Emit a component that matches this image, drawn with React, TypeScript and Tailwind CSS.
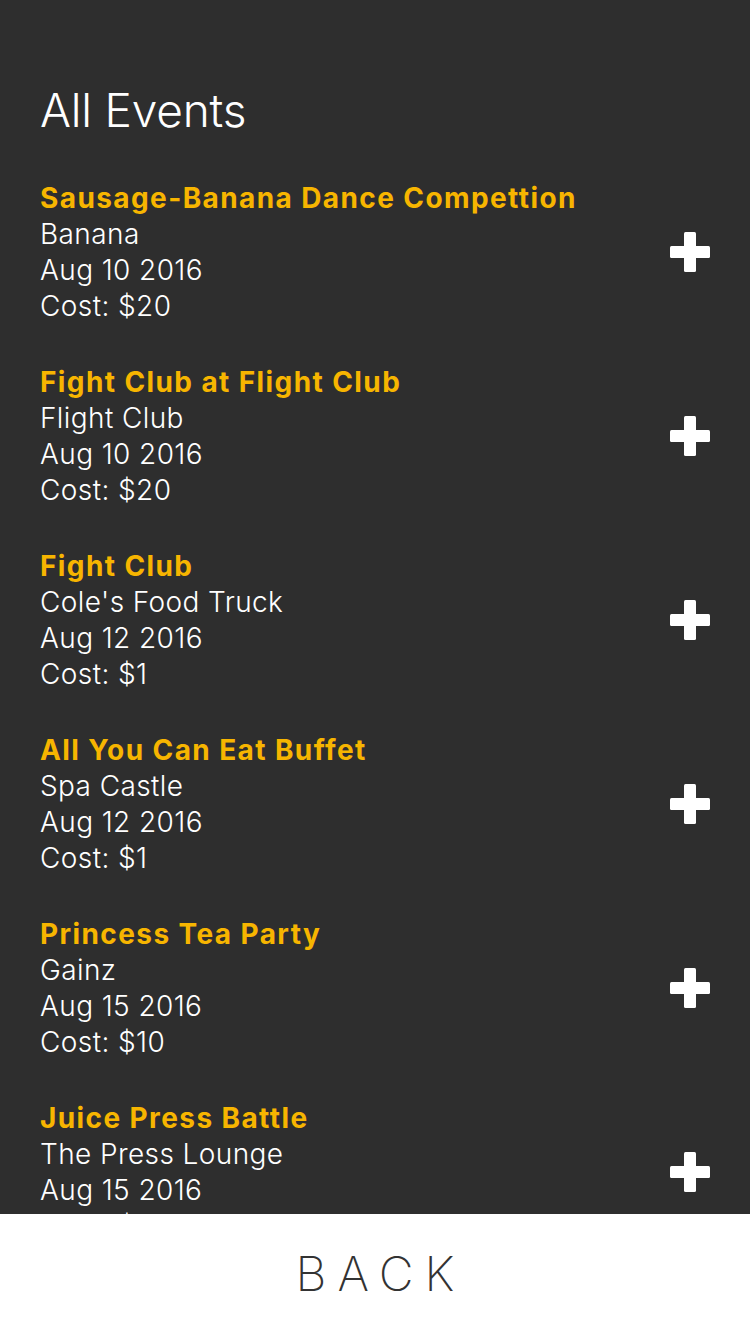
import React from "react";

const events = [
  { title: "Sausage-Banana Dance Compettion", place: "Banana", date: "Aug 10 2016", cost: "Cost: $20" },
  { title: "Fight Club at Flight Club", place: "Flight Club", date: "Aug 10 2016", cost: "Cost: $20" },
  { title: "Fight Club", place: "Cole's Food Truck", date: "Aug 12 2016", cost: "Cost: $1" },
  { title: "All You Can Eat Buffet", place: "Spa Castle", date: "Aug 12 2016", cost: "Cost: $1" },
  { title: "Princess Tea Party", place: "Gainz", date: "Aug 15 2016", cost: "Cost: $10" },
  { title: "Juice Press Battle", place: "The Press Lounge", date: "Aug 15 2016", cost: "Cost: $5" },
];

function Plus() {
  return (
    <svg width="40" height="40" viewBox="0 0 40 40">
      <rect x="14" y="0" width="12" height="40" rx="1.5" fill="#fff" />
      <rect x="0" y="14" width="40" height="12" rx="1.5" fill="#fff" />
    </svg>
  );
}

export default function App() {
  return (
    <div
      className="w-[750px] h-[1334px] flex flex-col bg-[#2e2e2e] overflow-hidden"
      style={{ fontFamily: "Inter, 'Noto Sans', sans-serif" }}
    >
      <div className="flex-1 overflow-hidden pl-[40px] pr-[40px]">
        <h1 className="pt-[80px] text-[46px] leading-[60px] font-light text-white tracking-[-0.2px]">All Events</h1>
        <div className="mt-[40px] flex flex-col gap-[40px]">
          {events.map((e, i) => (
            <div key={i} className="flex items-center justify-between">
              <div className="flex flex-col text-[28px] leading-[36px]">
                <div className="font-bold text-[#f7b500] tracking-[1.4px]">{e.title}</div>
                <div className="font-light text-white tracking-[0.4px]">{e.place}</div>
                <div className="font-light text-white tracking-[0.4px]">{e.date}</div>
                <div className="font-light text-white tracking-[0.4px]">{e.cost}</div>
              </div>
              <Plus />
            </div>
          ))}
        </div>
      </div>
      <div className="h-[120px] shrink-0 bg-white flex items-center justify-center">
        <span className="text-[48px] font-extralight text-[#333] tracking-[11px] pl-[11px]">BACK</span>
      </div>
    </div>
  );
}
